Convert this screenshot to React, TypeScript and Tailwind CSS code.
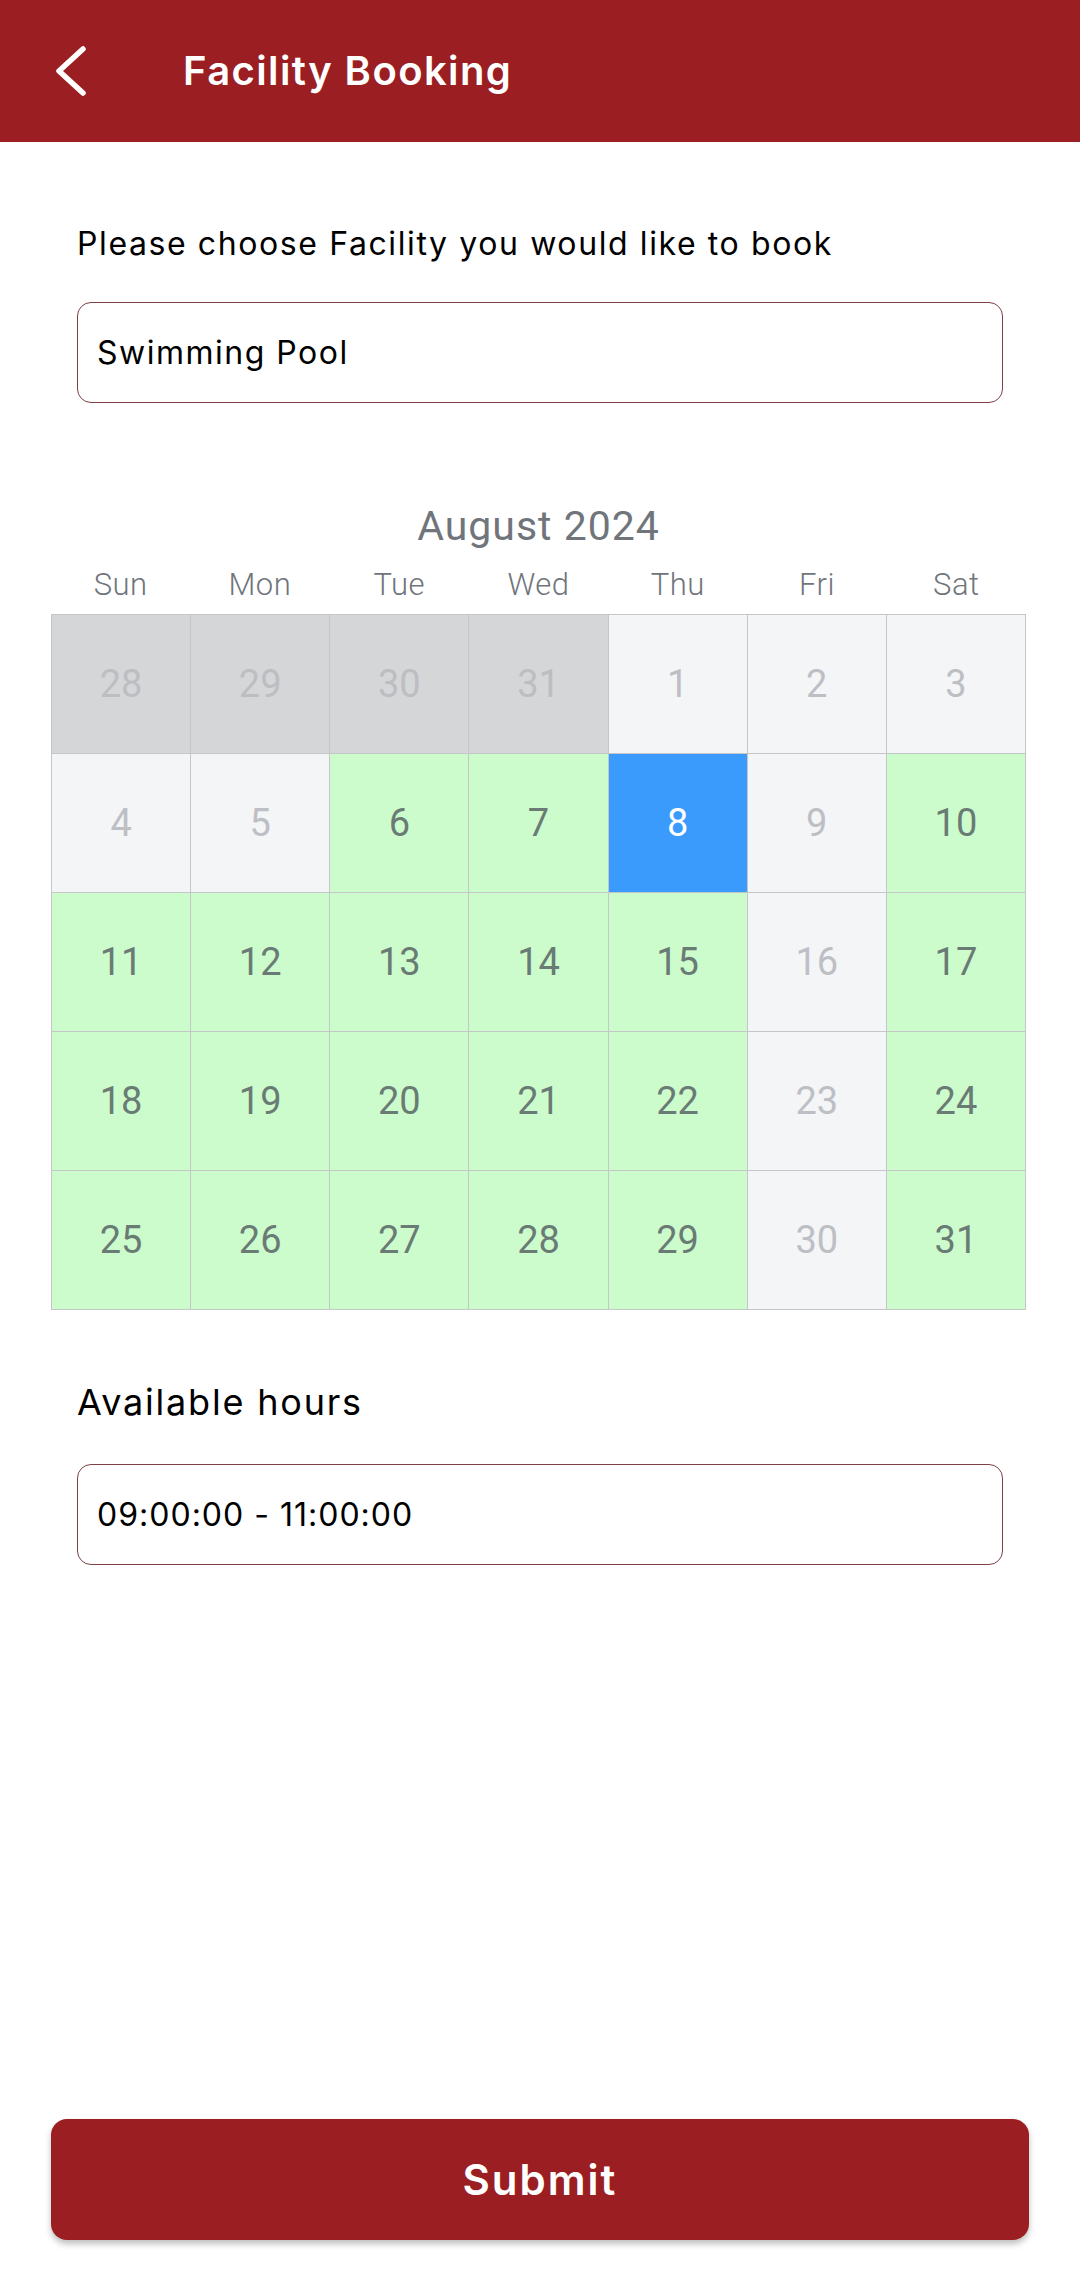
import React from "react";

type CellKind = "prev" | "off" | "open" | "picked";

const rows: [number, CellKind][][] = [
  [[28, "prev"], [29, "prev"], [30, "prev"], [31, "prev"], [1, "off"], [2, "off"], [3, "off"]],
  [[4, "off"], [5, "off"], [6, "open"], [7, "open"], [8, "picked"], [9, "off"], [10, "open"]],
  [[11, "open"], [12, "open"], [13, "open"], [14, "open"], [15, "open"], [16, "off"], [17, "open"]],
  [[18, "open"], [19, "open"], [20, "open"], [21, "open"], [22, "open"], [23, "off"], [24, "open"]],
  [[25, "open"], [26, "open"], [27, "open"], [28, "open"], [29, "open"], [30, "off"], [31, "open"]],
];

const weekDays = ["Sun", "Mon", "Tue", "Wed", "Thu", "Fri", "Sat"];

const cellClass: Record<CellKind, string> = {
  prev: "bg-[#d5d6d8] text-[#bcbec2]",
  off: "bg-[#f4f5f7] text-[#bdbfc4]",
  open: "bg-[#ccfccb] text-[#6a7b76]",
  picked: "bg-[#3a9bfc] text-white",
};

const Calendar = () => {
  return (
    <div className="mx-[51px] w-[975px] font-['Roboto',sans-serif]">
      <div className="mt-[101px] text-center text-[41px] leading-[44px] tracking-[1px] text-[#70757b]">
        August 2024
      </div>
      <div className="mt-[19px] grid grid-cols-7 text-center text-[31px] font-light leading-[36px] tracking-[0.5px] text-[#70757b]">
        {weekDays.map((d) => (
          <div key={d}>{d}</div>
        ))}
      </div>
      <div className="mt-[11px] grid grid-cols-7 border-l border-t border-[#c4c6c8]">
        {rows.flat().map(([day, kind], i) => (
          <div
            key={i}
            className={`flex h-[139px] items-center justify-center border-b border-r border-[#c4c6c8] text-[38px] ${cellClass[kind]}`}
          >
            {day}
          </div>
        ))}
      </div>
    </div>
  );
};

const Field = ({ value, wide }: { value: string; wide?: boolean }) => (
  <div
    className={`flex h-[101px] items-center rounded-[14px] border border-[#7b3f44] px-[19px] text-[32px] text-black ${
      wide ? "tracking-[1.5px]" : "tracking-[1px]"
    }`}
  >
    {value}
  </div>
);

export default function App() {
  return (
    <div className="flex min-h-[2291px] flex-col bg-white font-['Inter',sans-serif]">
      <header className="flex h-[142px] items-center bg-[#9a1e22] text-white">
        <svg
          className="ml-[54px] h-[50px] w-[33px]"
          viewBox="0 0 33 50"
          fill="none"
          stroke="currentColor"
          strokeWidth={5.5}
          strokeLinecap="round"
          strokeLinejoin="round"
        >
          <path d="M29 3L5 25l24 22" />
        </svg>
        <h1 className="ml-[96px] text-[40px] font-semibold tracking-[1.4px]">Facility Booking</h1>
      </header>

      <div className="px-[77px]">
        <p className="mt-[85px] text-[32px] leading-[34px] tracking-[1.6px] text-black">
          Please choose Facility you would like to book
        </p>
        <div className="mt-[41px]">
          <Field value="Swimming Pool" wide />
        </div>
      </div>

      <Calendar />

      <div className="px-[77px]">
        <p className="mt-[74px] text-[36px] leading-[36px] tracking-[1.8px] text-black">Available hours</p>
        <div className="mt-[44px]">
          <Field value="09:00:00 - 11:00:00" />
        </div>
      </div>

      <div className="mt-auto px-[51px] pb-[51px]">
        <button className="flex h-[121px] w-[978px] items-center justify-center rounded-[16px] bg-[#9a1e22] text-[42px] font-semibold tracking-[2px] text-white shadow-[0_4px_6px_rgba(0,0,0,0.25)]">
          Submit
        </button>
      </div>
    </div>
  );
}
